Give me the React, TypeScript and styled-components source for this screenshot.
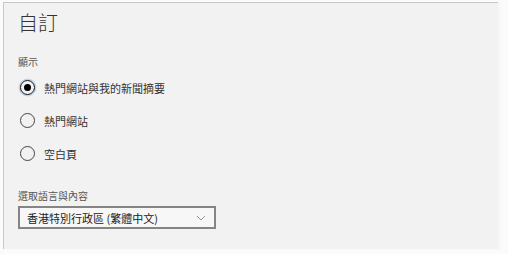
import styled, { createGlobalStyle } from 'styled-components';

const GlobalStyle = createGlobalStyle`
  html, body {
    margin: 0;
    padding: 0;
    background: #fbfbfb;
  }
  body {
    font-family: "Noto Sans CJK TC", "Noto Sans", sans-serif;
  }
`;

const Panel = styled.section`
  box-sizing: border-box;
  margin: 2px 0 0 3px;
  width: 495px;
  height: 247px;
  padding: 6px 0 0 14px;
  background: #f2f2f2;
  border-top: 1px solid #c8c8c8;
  border-left: 1px solid #c8c8c8;
  box-shadow: 3px 0 0 #f7f7f8;
`;

const Title = styled.h1`
  margin: 0;
  font-size: 20px;
  line-height: 28px;
  font-weight: 300;
  color: #333;
`;

const SectionLabel = styled.div<{ $top: number }>`
  margin-top: ${({ $top }) => $top}px;
  font-size: 10px;
  line-height: 14px;
  color: #555;
`;

const RadioList = styled.div`
  display: flex;
  flex-direction: column;
  margin-top: 2px;
`;

const RadioRow = styled.label`
  display: flex;
  align-items: center;
  gap: 9px;
  height: 33px;
  font-size: 11px;
  color: #333;
`;

const RadioCircle = styled.span<{ $checked?: boolean }>`
  box-sizing: border-box;
  width: 15px;
  height: 15px;
  margin-left: 2px;
  border-radius: 50%;
  border: 1px solid ${({ $checked }) => ($checked ? '#111' : '#444')};
  display: flex;
  align-items: center;
  justify-content: center;
  box-shadow: ${({ $checked }) => ($checked ? '0 0 0 1.5px #bcd4ea' : 'none')};

  &::after {
    content: '';
    display: ${({ $checked }) => ($checked ? 'block' : 'none')};
    width: 7px;
    height: 7px;
    border-radius: 50%;
    background: #000;
  }
`;

const Select = styled.div`
  box-sizing: border-box;
  margin-top: 3px;
  width: 198px;
  height: 23px;
  border: 2px solid #858585;
  background: #f7f7f7;
  display: flex;
  align-items: center;
  justify-content: space-between;
  padding: 0 8px 0 7px;
  font-size: 11px;
  color: #222;
`;

const Chevron = () => (
  <svg width="10" height="6" viewBox="0 0 10 6">
    <path d="M1 1 L5 5 L9 1" fill="none" stroke="#999" strokeWidth="1" />
  </svg>
);

const options = [
  { label: '熱門網站與我的新聞摘要', checked: true },
  { label: '熱門網站', checked: false },
  { label: '空白頁', checked: false },
];

const App = () => (
  <>
    <GlobalStyle />
    <Panel>
      <Title>自訂</Title>
      <SectionLabel $top={18}>顯示</SectionLabel>
      <RadioList>
        {options.map((o) => (
          <RadioRow key={o.label}>
            <RadioCircle $checked={o.checked} />
            {o.label}
          </RadioRow>
        ))}
      </RadioList>
      <SectionLabel $top={19}>選取語言與內容</SectionLabel>
      <Select>
        <span>香港特別行政區 (繁體中文)</span>
        <Chevron />
      </Select>
    </Panel>
  </>
);

export default App;
